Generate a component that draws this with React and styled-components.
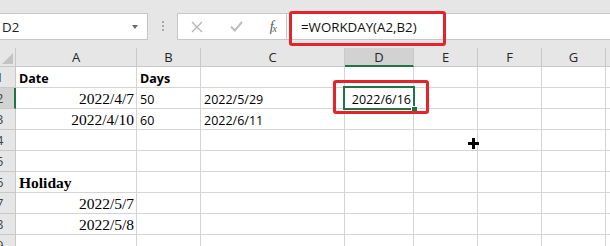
import React from 'react';
import styled, { createGlobalStyle } from 'styled-components';

const GlobalStyle = createGlobalStyle`
  html, body {
    margin: 0;
    padding: 0;
    background: #fff;
  }
  body {
    width: 610px;
    height: 246px;
    overflow: hidden;
    font-family: "Open Sans", "Liberation Sans", sans-serif;
  }
`;

const Window = styled.div`
  position: relative;
  width: 610px;
  height: 246px;
  overflow: hidden;
  background: #fff;
`;

const FormulaBar = styled.div`
  display: flex;
  align-items: flex-start;
  height: 48px;
  padding-top: 13px;
  box-sizing: border-box;
  background: #e6e6e6;
`;

const NameBox = styled.div`
  display: flex;
  align-items: center;
  justify-content: space-between;
  width: 148px;
  height: 27px;
  box-sizing: border-box;
  background: #fff;
  border: 1px solid #c6c6c6;
  border-left: none;
  padding: 0 9px 0 2px;
  font-size: 13.3px;
  color: #222;
`;

const Caret = styled.span`
  width: 0;
  height: 0;
  border-left: 3.5px solid transparent;
  border-right: 3.5px solid transparent;
  border-top: 4px solid #6a6a6a;
`;

const Grip = styled.div`
  display: flex;
  flex-direction: column;
  gap: 2px;
  margin: 8px 13px 0 14px;
  span {
    width: 2px;
    height: 2px;
    background: #a8a8a8;
  }
`;

const ButtonStrip = styled.div`
  display: flex;
  align-items: center;
  justify-content: space-between;
  width: 110px;
  height: 27px;
  box-sizing: border-box;
  padding: 0 10px 0 13px;
  background: #fff;
  border: 1px solid #c6c6c6;
`;

const FxLabel = styled.span`
  font-family: "Liberation Serif", serif;
  font-style: italic;
  font-size: 14px;
  color: #555;
  letter-spacing: -1px;
  sub {
    font-size: 10px;
    vertical-align: -1px;
  }
`;

const FormulaInput = styled.div`
  flex: 1;
  display: flex;
  align-items: center;
  height: 27px;
  box-sizing: border-box;
  padding-left: 14px;
  background: #fff;
  border: 1px solid #c6c6c6;
  border-left: none;
  border-right: none;
  font-size: 13.3px;
  color: #111;
`;

const Sheet = styled.div`
  display: grid;
  grid-template-columns: 16px 121px 64px 144px 69px 64px 64px 64px 1fr;
  grid-template-rows: 19px repeat(9, 21px);
`;

const Corner = styled.div`
  position: relative;
  background: #e6e6e6;
  border-right: 1px solid #c8c8c8;
  border-bottom: 1px solid #c8c8c8;
  box-sizing: border-box;
  &::after {
    content: '';
    position: absolute;
    right: 2px;
    bottom: 2px;
    border-left: 11px solid transparent;
    border-bottom: 11px solid #c3c3c3;
  }
`;

const ColHead = styled.div`
  display: flex;
  align-items: center;
  justify-content: center;
  box-sizing: border-box;
  background: ${(p) => (p.$selected ? '#d2d2d2' : '#e6e6e6')};
  border-right: 1px solid #c8c8c8;
  border-bottom: ${(p) => (p.$selected ? '2px solid #217346' : '1px solid #c8c8c8')};
  font-size: 13px;
  color: #262626;
  line-height: 18px;
`;

const RowHead = styled.div`
  display: flex;
  align-items: flex-end;
  overflow: hidden;
  box-sizing: border-box;
  background: ${(p) => (p.$selected ? '#d2d2d2' : '#e6e6e6')};
  border-right: ${(p) => (p.$selected ? '2px solid #217346' : '1px solid #c8c8c8')};
  border-bottom: 1px solid #c8c8c8;
  font-size: 13px;
  color: #444;
  span {
    margin-left: -4px;
    padding-bottom: 1px;
  }
`;

const Cell = styled.div`
  display: flex;
  align-items: flex-end;
  justify-content: ${(p) => (p.$align === 'right' ? 'flex-end' : 'flex-start')};
  box-sizing: border-box;
  padding: 0 2px 0 3px;
  border-right: 1px solid #d4d4d4;
  border-bottom: 1px solid #d4d4d4;
  white-space: nowrap;
  overflow: visible;
  color: #000;
  font-family: ${(p) =>
    p.$serif ? '"Liberation Serif", "Times New Roman", serif' : '"Open Sans", sans-serif'};
  font-size: ${(p) => (p.$serif ? '15.5px' : '12.5px')};
  font-weight: ${(p) => (p.$bold ? 700 : 400)};
`;

const Highlight = styled.div`
  position: absolute;
  box-sizing: border-box;
  border: 3px solid #e5232b;
  border-radius: 3px;
  pointer-events: none;
`;

const ActiveCell = styled.div`
  position: absolute;
  left: 343px;
  top: 86px;
  width: 72px;
  height: 24px;
  box-sizing: border-box;
  border: 2px solid #217346;
  &::after {
    content: '';
    position: absolute;
    right: -4px;
    bottom: -4px;
    width: 5px;
    height: 5px;
    background: #217346;
    border-left: 1px solid #fff;
    border-top: 1px solid #fff;
  }
`;

const Cursor = styled.svg`
  position: absolute;
  left: 468px;
  top: 138px;
`;

const columns = ['A', 'B', 'C', 'D', 'E', 'F', 'G', ''];

const rows = [
  [{ t: 'Date', bold: true }, { t: 'Days', bold: true }, {}, {}],
  [{ t: '2022/4/7', serif: true, align: 'right' }, { t: '50' }, { t: '2022/5/29' }, { t: '2022/6/16', align: 'right' }],
  [{ t: '2022/4/10', serif: true, align: 'right' }, { t: '60' }, { t: '2022/6/11' }, {}],
  [],
  [],
  [{ t: 'Holiday', serif: true, bold: true }],
  [{ t: '2022/5/7', serif: true, align: 'right' }],
  [{ t: '2022/5/8', serif: true, align: 'right' }],
  [],
];

export default function App() {
  return (
    <Window>
      <GlobalStyle />
      <FormulaBar>
        <NameBox>
          <span>D2</span>
          <Caret />
        </NameBox>
        <Grip>
          <span />
          <span />
          <span />
        </Grip>
        <ButtonStrip>
          <svg width="12" height="12" viewBox="0 0 12 12">
            <path d="M1 1 L11 11 M11 1 L1 11" stroke="#b4b4b4" strokeWidth="1.3" fill="none" />
          </svg>
          <svg width="13" height="11" viewBox="0 0 13 11">
            <path d="M1 5.5 L4.8 9.5 L12 1" stroke="#bdbdbd" strokeWidth="2" fill="none" />
          </svg>
          <FxLabel>
            f<sub>x</sub>
          </FxLabel>
        </ButtonStrip>
        <FormulaInput>=WORKDAY(A2,B2)</FormulaInput>
      </FormulaBar>

      <Sheet>
        <Corner />
        {columns.map((c, i) => (
          <ColHead key={i} $selected={c === 'D'}>
            {c}
          </ColHead>
        ))}
        {rows.map((row, r) => (
          <React.Fragment key={r}>
            <RowHead $selected={r === 1}>
              <span>{r + 1}</span>
            </RowHead>
            {columns.map((_, c) => {
              const cell = row[c] || {};
              return (
                <Cell key={c} $align={cell.align} $bold={cell.bold} $serif={cell.serif}>
                  {cell.t}
                </Cell>
              );
            })}
          </React.Fragment>
        ))}
      </Sheet>

      <ActiveCell />
      <Highlight style={{ left: 289, top: 11, width: 157, height: 35 }} />
      <Highlight style={{ left: 333, top: 80, width: 96, height: 34 }} />
      <Cursor width="11" height="11" viewBox="0 0 11 11">
        <path d="M4 0 H7 V4 H11 V7 H7 V11 H4 V7 H0 V4 H4 Z" fill="#000" />
      </Cursor>
    </Window>
  );
}
